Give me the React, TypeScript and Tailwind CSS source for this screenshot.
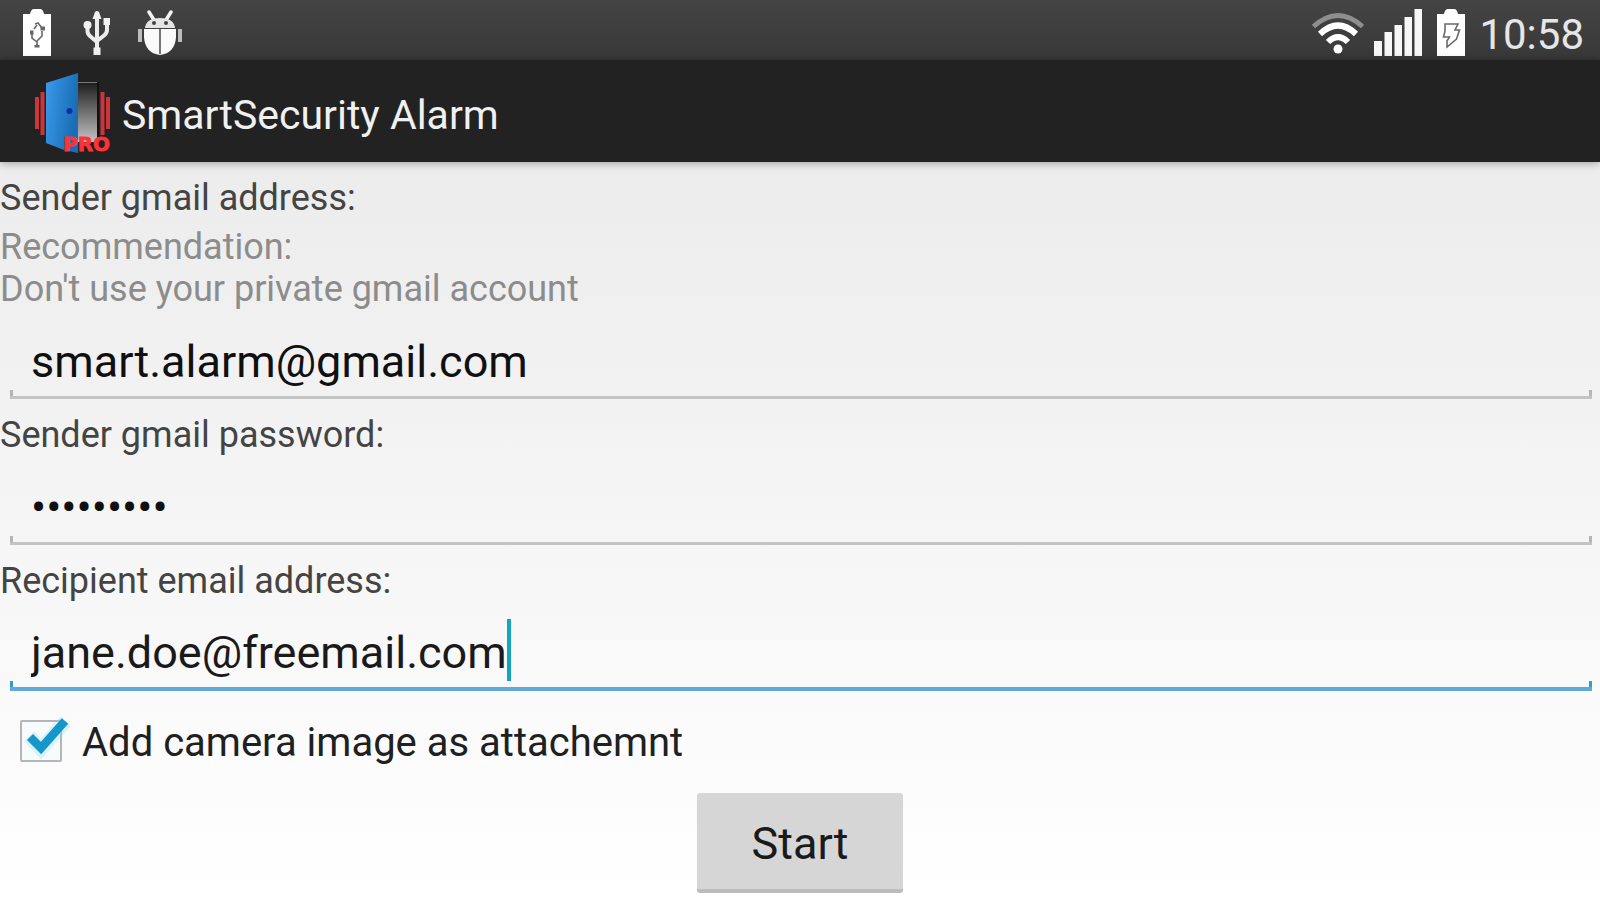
import { useState, type ReactNode } from 'react';

function BatteryShell({ children }: { children: ReactNode }) {
  return (
    <svg viewBox="0 0 32 50" className="h-[50px] w-8" aria-hidden="true">
      <path d="M2 6h7q1-5 4-5h6q3 0 4 5h7v42H2z" fill="#fff" />
      {children}
    </svg>
  );
}

function UsbBatteryIcon() {
  return (
    <BatteryShell>
      <g fill="none" stroke="#666" strokeWidth="1.6">
        <path d="M16 17l-3 4M16 34l-5-4v-5M16 33l5-5v-5M16 33v5" />
        <path d="M14 16l3-1 4 5" />
      </g>
      <path d="M9 22.500h3.500v4H9zM19.500 18.500h4.500v4h-4.500zM13.500 37h5v2.500h-5z" fill="#666" />
    </BatteryShell>
  );
}

function ChargingBatteryIcon() {
  return (
    <BatteryShell>
      <path
        d="M10 16h13l-3 6h4.500l-3 9L12 39v-6l2.500-4H8.500l1.500-6z"
        fill="none"
        stroke="#6a6a6a"
        strokeWidth="1.600"
      />
    </BatteryShell>
  );
}

function UsbIcon() {
  return (
    <svg viewBox="0 0 28 46" className="h-[46px] w-7" aria-hidden="true">
      <g fill="none" stroke="#ededed" strokeWidth="4">
        <path d="M14 6v34" />
        <path d="M4.500 14v7q0 3 3 5.500l6.500 5.500" />
        <path d="M24 11v9q0 3-3 5.500L14 31" />
      </g>
      <path d="M12 2q2-2 4 0l2.500 7h-9zM20.500 8h6.500v7h-6.500zM10.500 37.500h7V45h-7z" fill="#f2f2f2" />
      <circle cx="4.500" cy="15" r="4" fill="#f2f2f2" />
    </svg>
  );
}

function BugIcon() {
  return (
    <svg viewBox="0 0 46 46" className="h-[46px] w-[46px]" aria-hidden="true">
      <path d="M12 2l5 8M34 2l-5 8" stroke="#f2f2f2" strokeWidth="3.500" strokeLinecap="round" />
      <path d="M8 18q1-10 15-10t15 10z" fill="#e4e4e4" />
      <path d="M7 19h32v8q-1 16-16 18Q8 43 7 27z" fill="#fbfbfb" />
      <path d="M23 19v25" stroke="#777" strokeWidth="2" />
      <circle cx="17" cy="13" r="2" fill="#444" />
      <circle cx="29" cy="13" r="2" fill="#444" />
      <path d="M3 19v13M43 19v13" stroke="#bdbdbd" strokeWidth="4" />
    </svg>
  );
}

function WifiIcon() {
  return (
    <svg viewBox="0 0 54 44" className="h-11 w-[54px]" aria-hidden="true">
      <g fill="none" strokeWidth="5">
        <path d="M2.500 15.500q24.500-22 49 0" stroke="#8e8e8e" />
        <path d="M9 23q18-17 36 0" stroke="#fff" strokeWidth="6" />
        <path d="M17 31q10-10 20 0" stroke="#fff" strokeWidth="6" />
      </g>
      <circle cx="27" cy="38" r="4.500" fill="#fff" />
    </svg>
  );
}

function SignalIcon() {
  return (
    <svg viewBox="0 0 50 48" className="h-12 w-[50px]" aria-hidden="true">
      <path d="M1 32h8v15H1zM11.500 23h7.500v24h-7.500zM21.500 16h7.500v31h-7.500zM31.500 8h7.500v39h-7.500zM41.500 0h7.500v47h-7.500z" fill="#f7f7f7" />
    </svg>
  );
}

function DoorLogo() {
  return (
    <svg viewBox="0 0 78 82" className="h-[82px] w-[78px]" aria-hidden="true">
      <defs>
        <linearGradient id="door" x1="0" y1="0" x2="1" y2="0.3">
          <stop offset="0" stopColor="#3a9bec" />
          <stop offset="1" stopColor="#1a6cb4" />
        </linearGradient>
        <linearGradient id="room" x1="0" y1="0" x2="0" y2="1">
          <stop offset="0" stopColor="#1c1c1c" />
          <stop offset="1" stopColor="#c4c4c4" />
        </linearGradient>
      </defs>
      <path d="M3 24v32M8.500 19v43" stroke="#c9373b" strokeWidth="4" />
      <path d="M68.500 19v43M74 24v32" stroke="#c9373b" strokeWidth="4" />
      <path d="M44 9h20v60H44z" fill="url(#room)" />
      <path d="M44 9.500h20" stroke="#777" strokeWidth="1" />
      <path d="M64 9v58" stroke="#111" strokeWidth="2" />
      <path d="M12 10L44 0v80L30 77 12 70z" fill="url(#door)" />
      <circle cx="35.500" cy="38" r="3" fill="#0b2fa8" />
      <text
        x="29"
        y="78"
        fill="#ff3236"
        stroke="#ff3236"
        fontFamily="'DejaVu Sans', sans-serif"
        fontWeight="700"
        fontSize="20"
        strokeWidth="0.800"
      >
        PRO
      </text>
    </svg>
  );
}

type FieldProps = {
  id: string;
  label: string;
  type: string;
  value: string;
  onChange: (value: string) => void;
  hint?: ReactNode;
  active?: boolean;
};

function Field({ id, label, type, value, onChange, hint, active = false }: FieldProps) {
  const tone = active ? 'border-b-4 border-[#5fa9d6]' : 'border-b-[3px] border-[#c2c3c3]';
  const tick = active ? 'bg-[#2f9fca]' : 'bg-[#b4b5b5]';
  return (
    <div>
      <label htmlFor={id} className="block pt-3 pb-[2px] text-[36px] leading-[48px] text-[#444]">
        {label}
      </label>
      {hint}
      <div className={`relative mr-2 ml-[10px] flex h-[84px] items-center pt-3 pl-[21px] ${tone}`}>
        <input
          id={id}
          type={type}
          value={value}
          onChange={(e) => onChange(e.target.value)}
          className={
            active
              ? 'field-sizing-content h-[62px] min-w-0 bg-transparent text-[45px] text-[#1a1a1a] caret-transparent outline-none'
              : 'h-[62px] w-full min-w-0 bg-transparent text-[45px] text-[#101010] outline-none'
          }
        />
        {active && <span className="h-[62px] w-1 self-start bg-[#12a5bd]" />}
        <span className={`absolute bottom-0 left-0 h-[6px] w-[3px] ${tick}`} />
        <span className={`absolute right-0 bottom-0 h-[6px] w-[3px] ${tick}`} />
      </div>
    </div>
  );
}

export default function App() {
  const [sender, setSender] = useState('smart.alarm@gmail.com');
  const [password, setPassword] = useState('alarm1234');
  const [recipient, setRecipient] = useState('jane.doe@freemail.com');
  const [attach, setAttach] = useState(true);

  return (
    <div className="flex min-h-screen flex-col overflow-hidden bg-linear-to-b from-[#e8e8e8] to-white font-[Roboto,sans-serif]">
      <div className="flex h-[60px] items-center justify-between bg-linear-to-b from-[#444] to-[#383838] pt-[6px] pr-4 pl-[21px]">
        <div className="flex items-center">
          <UsbBatteryIcon />
          <span className="ml-[30px] flex items-center gap-[26px]">
            <UsbIcon />
            <BugIcon />
          </span>
        </div>
        <div className="flex items-center">
          <WifiIcon />
          <span className="ml-2 flex items-center gap-3">
            <SignalIcon />
            <ChargingBatteryIcon />
          </span>
          <time className="ml-3 pt-1 text-[42px] leading-[52px] text-[#e6e6e6]">10:58</time>
        </div>
      </div>

      <header className="flex h-[102px] items-center gap-[10px] bg-[#222] pt-[6px] pl-[34px] shadow-[0_1px_8px_rgba(0,0,0,0.35)]">
        <DoorLogo />
        <h1 className="pt-1 text-[41px] text-[#f0f0f0]">SmartSecurity Alarm</h1>
      </header>

      <form className="flex flex-col" onSubmit={(e) => e.preventDefault()}>
        <Field
          id="sender"
          label="Sender gmail address:"
          type="email"
          value={sender}
          onChange={setSender}
          hint={
            <p className="mt-[2px] mb-[5px] text-[36px] leading-[42px] text-[#8c8c8c]">
              Recommendation:
              <br />
              Don't use your private gmail account
            </p>
          }
        />
        <Field id="password" label="Sender gmail password:" type="password" value={password} onChange={setPassword} />
        <Field id="recipient" label="Recipient email address:" type="text" value={recipient} onChange={setRecipient} active />

        <label className="mt-[18px] flex h-16 items-center pl-5 text-[40px] text-[#202020]">
          <span className="relative mr-5 flex h-[42px] w-[42px]">
            <input
              type="checkbox"
              checked={attach}
              onChange={(e) => setAttach(e.target.checked)}
              className="h-full w-full appearance-none rounded-[2px] border-2 border-[#b5b5b5] bg-[#f8fbfc]"
            />
            {attach && (
              <svg viewBox="0 0 50 44" className="pointer-events-none absolute -top-1 left-0 h-11 w-[50px]" aria-hidden="true">
                <path d="M9 20l12 13L46 5" fill="none" stroke="#8fdcf5" strokeWidth="14" opacity="0.3" />
                <path d="M10 21l11 11L45 5" fill="none" stroke="#1597ca" strokeWidth="8.500" />
              </svg>
            )}
          </span>
          <span className="pt-1">Add camera image as attachemnt</span>
        </label>

        <button
          type="submit"
          className="mt-5 h-[100px] w-[206px] self-center rounded-[3px] border-b-4 border-[#bcbcbc] bg-[#d6d6d6] pt-[6px] text-[45px] text-[#1a1a1a]"
        >
          Start
        </button>
      </form>
    </div>
  );
}
